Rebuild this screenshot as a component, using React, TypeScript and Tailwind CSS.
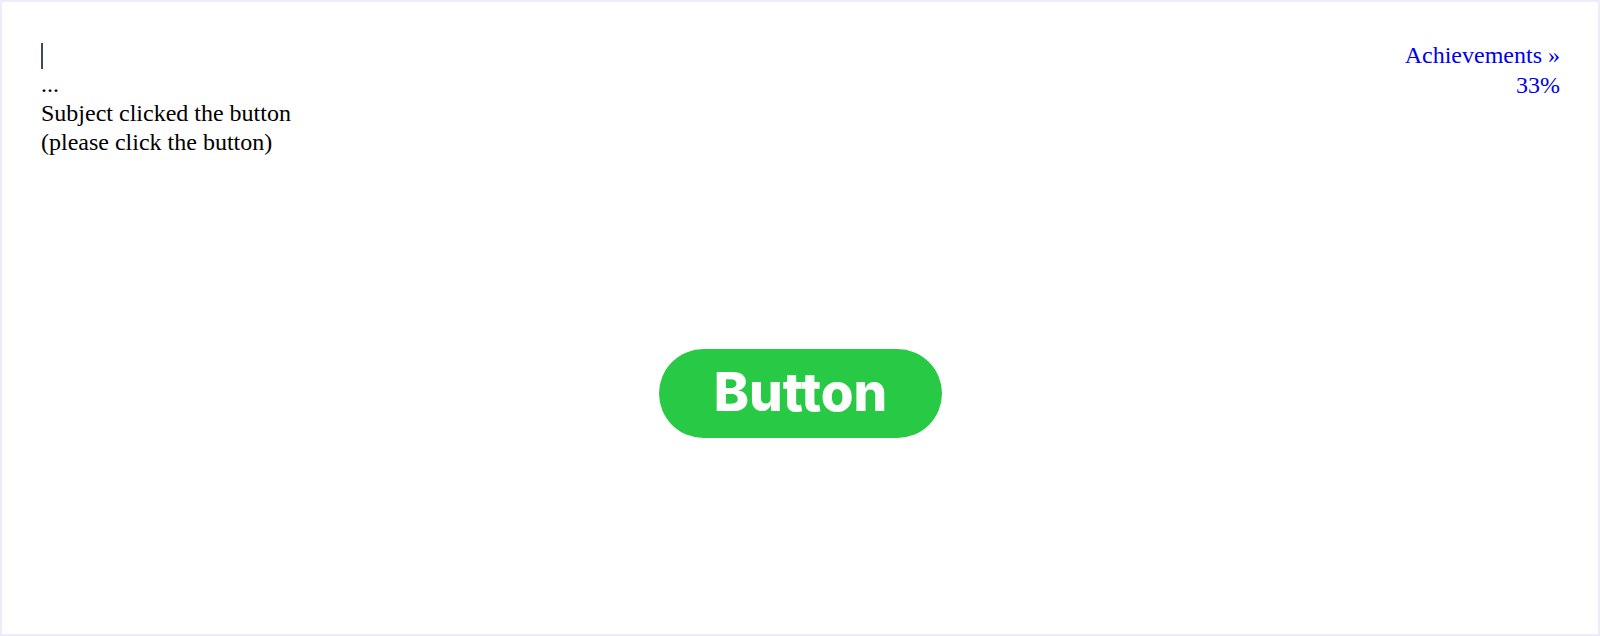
import React from "react";

const App: React.FC = () => {
  return (
    <div className="h-[636px] w-full border-2 border-[#eeebfb] bg-white font-['Liberation_Serif',serif] text-black">
      <div className="flex items-start justify-between pl-[39px] pr-[38px] pt-[39px]">
        <div className="text-[24px] leading-[29px]">
          <div className="flex h-[29px] items-center">
            <span className="block h-[26px] w-[1.5px] bg-[#3a4a5c]" />
          </div>
          <div>...</div>
          <div>Subject clicked the button</div>
          <div>(please click the button)</div>
        </div>
        <div className="-mt-[1px] text-right text-[24px] leading-[30px] text-[#0000ee]">
          <a className="block cursor-pointer">Achievements »</a>
          <div>33%</div>
        </div>
      </div>
      <div className="mt-[192px] pl-[657px]">
        <button className="flex h-[89px] w-[283px] items-center justify-center rounded-full bg-[#28c945] pb-[2px] font-['Inter',sans-serif] text-[53px] font-extrabold leading-none text-white">
          Button
        </button>
      </div>
    </div>
  );
};

export default App;
